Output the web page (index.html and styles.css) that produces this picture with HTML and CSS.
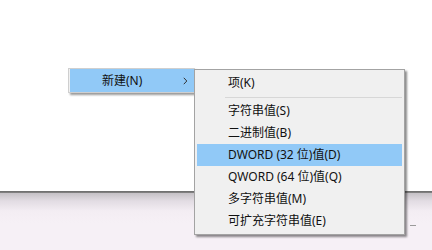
FILE: index.html
```html
<!DOCTYPE html>
<html lang="zh-CN">
<head>
<meta charset="utf-8">
<title>新建</title>
<link rel="stylesheet" href="styles.css">
</head>
<body>
<div class="screen">
  <div class="window-top"></div>
  <div class="window-edge"></div>
  <div class="window-bottom"><span class="mark"></span></div>

  <div class="menu parent-menu">
    <div class="pitem active">
      <span class="plabel">新建(N)</span>
      <svg class="chev" width="5" height="8" viewBox="0 0 5 8"><polyline points="0.8,0.8 3.8,4 0.8,7.2" fill="none" stroke="#333" stroke-width="1"/></svg>
    </div>
  </div>

  <div class="menu sub-menu">
    <div class="item">项(K)</div>
    <div class="sep"></div>
    <div class="item">字符串值(S)</div>
    <div class="item">二进制值(B)</div>
    <div class="item active">DWORD (32 位)值(D)</div>
    <div class="item">QWORD (64 位)值(Q)</div>
    <div class="item">多字符串值(M)</div>
    <div class="item">可扩充字符串值(E)</div>
  </div>
</div>
</body>
</html>
```
FILE: styles.css
```css
html, body {
  margin: 0;
  padding: 0;
  background: #ffffff;
}
.screen {
  position: relative;
  width: 432px;
  height: 250px;
  overflow: hidden;
  display: flex;
  flex-direction: column;
  font-family: "Noto Sans", "Noto Sans CJK SC", sans-serif;
  font-size: 12px;
  color: #111;
}
.window-top {
  height: 191px;
  background: #ffffff;
}
.window-edge {
  height: 2px;
  background: linear-gradient(#6a6a6a, #858585);
}
.window-bottom {
  flex: 1;
  display: flex;
  justify-content: flex-end;
  align-items: flex-start;
  background: linear-gradient(#c4c0c5 0px, #e2dce3 8px, #f3edf3 18px, #f6f0f6 30px);
}
.mark {
  width: 6px;
  height: 1px;
  margin-top: 32px;
  margin-right: 16px;
  background: #9a9a9a;
}
.menu {
  position: absolute;
  box-sizing: border-box;
}
.parent-menu {
  left: 68px;
  top: 68px;
  width: 127px;
  height: 25px;
  border: 1px solid #cfcfcf;
  background: #f0f0f0;
  padding: 0 0 0 1px;
  box-shadow: 2px 2px 2px rgba(0,0,0,0.4);
}
.pitem {
  height: 23px;
  display: flex;
  align-items: center;
  padding-left: 32px;
  padding-right: 6px;
}
.pitem.active {
  background: #91c9f7;
}
.plabel {
  flex: 1;
  line-height: 23px;
}
.chev {
  display: block;
}
.sub-menu {
  left: 194px;
  top: 69px;
  width: 211px;
  border: 1px solid #a3a3a3;
  background: #f0f0f0;
  padding: 2px;
  box-shadow: 2px 2px 2px rgba(0,0,0,0.45);
}
.item {
  height: 22px;
  line-height: 22px;
  padding-left: 31px;
  white-space: nowrap;
}
.item.active {
  background: #91c9f7;
}
.sep {
  height: 6px;
  display: flex;
  align-items: center;
  padding-left: 28px;
}
.sep::before {
  content: "";
  flex: 1;
  height: 1px;
  background: #d7d7d7;
}
```
